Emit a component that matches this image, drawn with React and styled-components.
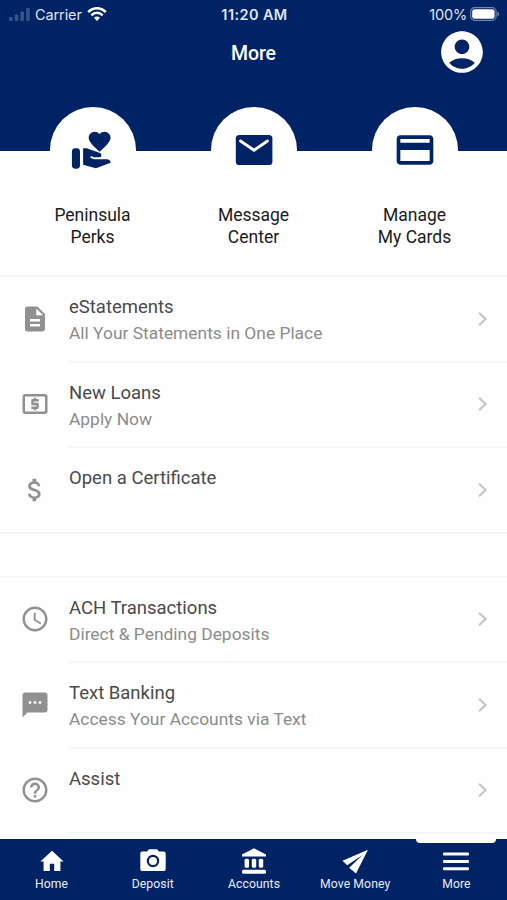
import React, {useState} from 'react';
import styled, {createGlobalStyle} from 'styled-components';
import {
  MdAccountCircle,
  MdCreditCard,
  MdDescription,
  MdLocalAtm,
  MdAttachMoney,
  MdAccessTime,
  MdTextsms,
  MdHelpOutline,
} from 'react-icons/md';

const GlobalStyle = createGlobalStyle`
  * {
    box-sizing: border-box;
  }
  body {
    margin: 0;
    background-color: #fefefe;
    font-family: Roboto, sans-serif;
  }
  svg {
    display: block;
  }
`
const Screen = styled.div`
  display: flex;
  flex-direction: column;
  width: 507px;
  height: 900px;
  overflow: hidden;
  background-color: #fefefe;
`
const Header = styled.header`
  height: 151px;
  flex-shrink: 0;
  background-color: #002366;
  color: white;
`
const StatusBar = styled.div`
  display: grid;
  grid-template-columns: 1fr auto 1fr;
  align-items: center;
  height: 28px;
  padding: 0 7px 0 9px;
  font-family: Inter, sans-serif;
  font-size: 14.5px;
  color: #dfe5f2;
`
const StatusSide = styled.div`
  display: flex;
  align-items: center;
  justify-content: ${(props) => props.$end ? 'flex-end' : 'flex-start'};
  gap: ${(props) => props.$end ? '3px' : '5px'};
  letter-spacing: ${(props) => props.$end ? '-0.2px' : '-0.1px'};
`
const Time = styled.div`
  font-size: 14.5px;
  font-weight: 600;
  letter-spacing: 0.4px;
`
const TitleBar = styled.div`
  display: grid;
  grid-template-columns: 1fr auto 1fr;
  align-items: center;
  height: 50px;
  padding-right: 20px;
`
const Title = styled.h1`
  grid-column: 2;
  margin: 0;
  padding-left: 20px;
  font-size: 19.5px;
  font-weight: 500;
  letter-spacing: -0.1px;
`
const Profile = styled.button`
  appearance: none;
  border: 0;
  padding: 0;
  margin-top: -2px;
  background: none;
  color: white;
  justify-self: end;
  cursor: pointer;
`
const Shortcuts = styled.div`
  display: grid;
  grid-template-columns: repeat(3, 1fr);
  height: 170px;
  margin-top: -44px;
  padding: 0 12px;
  flex-shrink: 0;
  border-bottom: 2px solid #f6f6f7;
`
const Shortcut = styled.div`
  display: flex;
  flex-direction: column;
  align-items: center;
  text-align: center;
  font-size: 17.5px;
  line-height: 22.5px;
  color: #1c1c1c;
  white-space: pre-line;
`
const Circle = styled.div`
  display: flex;
  justify-content: center;
  align-items: center;
  width: 86px;
  height: 86px;
  margin-bottom: 10.5px;
  border-radius: 50%;
  background-color: #ffffff;
  color: #002366;
`
const List = styled.div`
  display: flex;
  flex-direction: column;
`
const Gap = styled.div`
  height: 44px;
  border-bottom: 2px solid #f6f6f7;
`
const Row = styled.div`
  display: grid;
  grid-template-columns: 69px 1fr;
  height: 85.5px;
`
const RowIcon = styled.div`
  display: flex;
  align-items: center;
  padding-left: 20px;
  color: #919191;
  border-bottom: 2px solid ${(props) => props.$full ? '#f6f6f7' : 'transparent'};
`
const RowBody = styled.div`
  display: flex;
  justify-content: space-between;
  align-items: center;
  padding-right: 19px;
  border-bottom: 2px solid #f6f6f7;
`
const RowText = styled.div`
  align-self: flex-start;
  padding-top: 17px;
`
const RowTitle = styled.div`
  font-size: 18.5px;
  line-height: 26px;
  color: #4a4a4a;
`
const RowNote = styled.div`
  font-size: 17.4px;
  line-height: 26px;
  color: #8c8c8c;
`
const Tabs = styled.nav`
  display: grid;
  grid-template-columns: repeat(5, 1fr);
  height: 61px;
  margin-top: auto;
  padding-left: 1px;
  flex-shrink: 0;
  background-color: #002366;
`
const Tab = styled.button`
  appearance: none;
  border: 0;
  padding: 0;
  background: none;
  display: flex;
  flex-direction: column;
  align-items: center;
  font-family: inherit;
  font-size: 12.2px;
  line-height: 17px;
  letter-spacing: 0.1px;
  color: #e8ecf5;
  cursor: pointer;
`
const Marker = styled.div`
  width: 80px;
  height: 4px;
  margin-bottom: 5px;
  border-radius: 0 0 4px 4px;
  background-color: ${(props) => props.$active ? '#fefefe' : 'transparent'};
`
const TabIcon = styled.svg`
  width: 28px;
  height: 28px;
  fill: white;
`

const HandHeart = () => (
  <svg width="44" height="44" viewBox="0.4 0 24 24" fill="currentColor">
    <rect x="0.9" y="11" width="4.4" height="11.2" rx="1.9" />
    <path d="M20 17q.86 0 1.45.6t.58 1.400L14 22l-7-2v-9h1.950l7.270 2.690q.78.31.78 1.120 0 .47-.34.82t-.86.37H13l-1.750-.67-.33.94L13 17z" />
    <path d="M16 3.230Q17.060 2 18.700 2q1.360 0 2.330 1T22 5.300q0 1.030-1 2.460t-1.970 2.390T16 13q-2.080-1.890-3.060-2.850t-1.970-2.390T10 5.300q0-1.360.97-2.300t2.340-1q1.600 0 2.690 1.230" />
  </svg>
)
const Envelope = () => (
  <svg width="44" height="44" viewBox="0 0 44 44">
    <rect x="3.8" y="7" width="36.6" height="30" rx="3.6" fill="currentColor" />
    <path d="M8.500 13L22 22.200 35.500 13" fill="none" stroke="white" strokeWidth="2.900" strokeLinecap="round" />
  </svg>
)
const Signal = () => (
  <svg width="21" height="13" viewBox="0 0 21 13" fill="#34538c">
    <rect x="0" y="9" width="3.6" height="4" rx="1" />
    <rect x="5.7" y="6.5" width="3.6" height="6.5" rx="1" />
    <rect x="11.4" y="3.5" width="3.6" height="9.5" rx="1" />
    <rect x="17.1" y="0" width="3.6" height="13" rx="1" />
  </svg>
)
const Wifi = () => (
  <svg width="20" height="14" viewBox="0 0 20 14" fill="none" stroke="white" strokeWidth="2.5">
    <path d="M1.2 5.2C6-.1 14-.1 18.8 5.2" />
    <path d="M4.4 8.3c3.1-3.3 8.1-3.3 11.2 0" />
    <path d="M10 14l-3-3.2c1.7-1.6 4.3-1.6 6 0z" fill="white" stroke="none" />
  </svg>
)
const Battery = () => (
  <svg width="30" height="14" viewBox="0 0 30 14">
    <rect x="0.7" y="0.7" width="25.4" height="12.6" rx="3.8" fill="none" stroke="#7185ad" strokeWidth="1.2" />
    <rect x="2.2" y="2.2" width="22.4" height="9.6" rx="2.4" fill="white" />
    <path d="M27.4 4.7c2.2.7 2.2 3.9 0 4.6z" fill="#7185ad" />
  </svg>
)
const Chevron = () => (
  <svg width="11" height="16" viewBox="0 0 11 16" fill="none" stroke="#c6c6c6" strokeWidth="2.2">
    <path d="M2 1.8L8.6 8 2 14.2" />
  </svg>
)

const shortcuts = [
  {label: 'Peninsula\nPerks', icon: <HandHeart />},
  {label: 'Message\nCenter', icon: <Envelope />},
  {label: 'Manage\nMy Cards', icon: <MdCreditCard size={44} />},
]

const products = [
  {title: 'eStatements', note: 'All Your Statements in One Place', icon: MdDescription},
  {title: 'New Loans', note: 'Apply Now', icon: MdLocalAtm},
  {title: 'Open a Certificate', icon: MdAttachMoney, full: true},
]

const services = [
  {title: 'ACH Transactions', note: 'Direct & Pending Deposits', icon: MdAccessTime},
  {title: 'Text Banking', note: 'Access Your Accounts via Text', icon: MdTextsms},
  {title: 'Assist', icon: MdHelpOutline},
]

const tabs = [
  {name: 'Home', icon: <path d="M14 2.800L2.400 13.600h3.200V23h6.200v-7.200h4.400V23h6.200v-9.400h3.200z" />},
  {
    name: 'Deposit',
    icon: <g>
      <path fillRule="evenodd" d="M10 1.200h8l2 2.200h4.700q2 0 2 2V21q0 2-2 2H3.300q-2 0-2-2V5.400q0-2 2-2H8zM14 6.800a6.200 6.200 0 1 0 0 12.400a6.200 6.200 0 1 0 0-12.400z" />
      <circle cx="14" cy="13" r="4" />
    </g>,
  },
  {
    name: 'Accounts',
    icon: <g>
      <path d="M14 0.300L26 6.600v2H2v-2z" />
      <rect x="4.600" y="10.800" width="4.400" height="9" rx="1.500" />
      <rect x="11.800" y="10.800" width="4.400" height="9" rx="1.500" />
      <rect x="18.800" y="10.800" width="4.400" height="9" rx="1.500" />
      <rect x="2" y="21.700" width="24" height="4" rx="1.500" />
    </g>,
  },
  {
    name: 'Move Money',
    icon: <path d="M27 1.800L1.500 12.800l4.700 4.400L21.500 7 8.200 19.800 15 25.500z" />,
  },
  {
    name: 'More',
    icon: <g>
      <rect x="1" y="4.600" width="26" height="3" rx="1" />
      <rect x="1" y="12" width="26" height="3" rx="1" />
      <rect x="1" y="19.300" width="26" height="3" rx="1" />
    </g>,
  },
]

function Section({items}) {
  return (
    <React.Fragment>
      {items.map(({title, note, icon: Icon, full}) => (
        <Row key={title}>
          <RowIcon $full={full}><Icon size={30} /></RowIcon>
          <RowBody>
            <RowText>
              <RowTitle>{title}</RowTitle>
              {note && <RowNote>{note}</RowNote>}
            </RowText>
            <Chevron />
          </RowBody>
        </Row>
      ))}
    </React.Fragment>
  );
}

function App() {
  const [active, setActive] = useState('More');

  return (
    <Screen>
      <GlobalStyle />
      <Header>
        <StatusBar>
          <StatusSide><Signal />Carrier<Wifi /></StatusSide>
          <Time>11:20 AM</Time>
          <StatusSide $end>100%<Battery /></StatusSide>
        </StatusBar>
        <TitleBar>
          <Title>More</Title>
          <Profile type='button' aria-label='Profile'><MdAccountCircle size={50} /></Profile>
        </TitleBar>
      </Header>
      <Shortcuts>
        {shortcuts.map((item) => (
          <Shortcut key={item.label}>
            <Circle>{item.icon}</Circle>
            {item.label}
          </Shortcut>
        ))}
      </Shortcuts>
      <List>
        <Section items={products} />
        <Gap />
        <Section items={services} />
      </List>
      <Tabs>
        {tabs.map((tab) => (
          <Tab key={tab.name} type='button' onClick={() => setActive(tab.name)}>
            <Marker $active={tab.name === active} />
            <TabIcon viewBox="0 0 28 28">{tab.icon}</TabIcon>
            {tab.name}
          </Tab>
        ))}
      </Tabs>
    </Screen>
  );
}

export default App;
